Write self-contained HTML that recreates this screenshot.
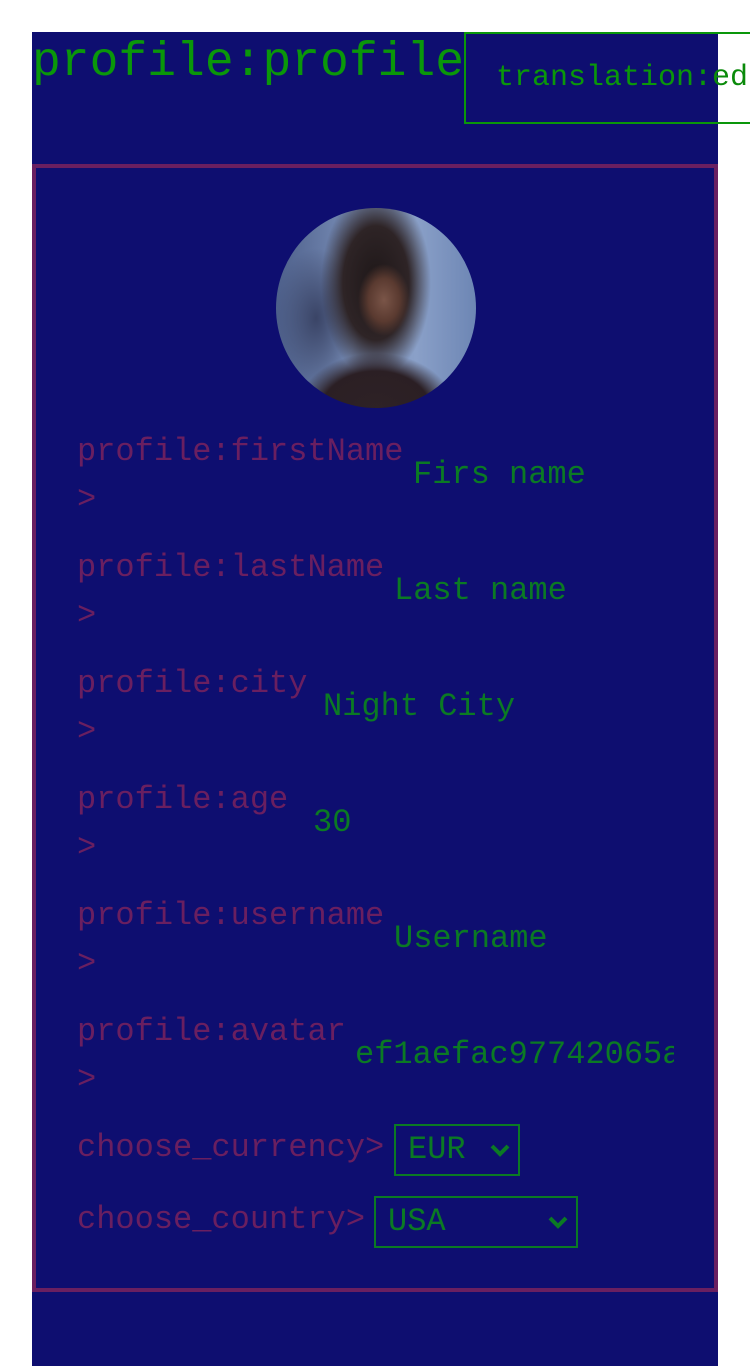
<!DOCTYPE html>
<html><head><meta charset="utf-8"><style>
*{margin:0;padding:0;box-sizing:border-box}
html,body{width:750px;height:1366px;background:#fff;overflow:hidden;font-family:"Liberation Mono",monospace}
#main{position:absolute;left:32px;top:32px;width:686px;height:1334px;background:#0e0e70}
.h1{position:absolute;left:32px;top:33px;font-size:48px;line-height:60px;color:#0a970a;white-space:nowrap}
.btn{position:absolute;left:464px;top:32px;width:300px;height:92px;border:2px solid #0a970a;font-size:30px;color:#0a970a;padding:27px 0 0 30px;white-space:nowrap;overflow:hidden;background:linear-gradient(90deg,#0e0e70 252px,#fff 252px)}
.btn span{color:#0a8a0a}
.card{position:absolute;left:32px;top:164px;width:686px;height:1128px;border:4px solid #6a1f60}
.av{position:absolute;left:276px;top:208px;width:200px;height:200px;border-radius:50%;overflow:hidden;
background:
radial-gradient(ellipse 26px 36px at 108px 92px,#7a5548 0%,#5a3a30 60%,rgba(0,0,0,0) 100%),
radial-gradient(ellipse 80px 60px at 100px 205px,#2e2226 0%,#2b1f24 70%,rgba(0,0,0,0) 100%),
radial-gradient(ellipse 55px 95px at 100px 75px,#1e1718 0%,#2e2426 60%,rgba(0,0,0,0) 100%),
radial-gradient(ellipse 40px 70px at 40px 110px,#3a4466 0%,rgba(0,0,0,0) 100%),
linear-gradient(90deg,#4d5f8a 0%,#7a8fb8 40%,#8aa0c8 70%,#6d86b4 100%)}
.lbl{position:absolute;left:77px;font-size:32px;line-height:48px;color:#6a1f60;white-space:pre}
.inp{position:absolute;font-size:32px;line-height:48px;color:#0b7a24;white-space:nowrap;overflow:hidden}
.sel{position:absolute;border:2px solid #0b7a24;font-size:32px;line-height:48px;color:#0b7a24;padding-left:12px}
.sel svg{position:absolute;right:8px;top:17px}
</style></head><body>
<div id="main"></div>
<div class="h1">profile:profile</div>
<div class="btn">translation:<span>edit</span></div>
<div class="card"></div>
<div class="av"></div>

<div class="lbl" style="top:428px">profile:firstName
&gt;</div><div class="inp" style="left:413px;top:451px;width:300px">Firs name</div>
<div class="lbl" style="top:544px">profile:lastName
&gt;</div><div class="inp" style="left:394px;top:567px;width:300px">Last name</div>
<div class="lbl" style="top:660px">profile:city
&gt;</div><div class="inp" style="left:323px;top:683px;width:300px">Night City</div>
<div class="lbl" style="top:776px">profile:age
&gt;</div><div class="inp" style="left:313px;top:799px;width:300px">30</div>
<div class="lbl" style="top:892px">profile:username
&gt;</div><div class="inp" style="left:394px;top:915px;width:300px">Username</div>
<div class="lbl" style="top:1008px">profile:avatar
&gt;</div><div class="inp" style="left:355px;top:1031px;width:319px">ef1aefac97742065a</div>

<div class="lbl" style="top:1124px">choose_currency&gt;</div>
<div class="sel" style="left:394px;top:1124px;width:126px;height:52px">EUR<svg width="20" height="14" viewBox="0 0 20 14"><path d="M2 3 L10 11 L18 3" stroke="#0b7a24" stroke-width="4" fill="none"/></svg></div>
<div class="lbl" style="top:1196px">choose_country&gt;</div>
<div class="sel" style="left:374px;top:1196px;width:204px;height:52px">USA<svg width="20" height="14" viewBox="0 0 20 14"><path d="M2 3 L10 11 L18 3" stroke="#0b7a24" stroke-width="4" fill="none"/></svg></div>
</body></html>
